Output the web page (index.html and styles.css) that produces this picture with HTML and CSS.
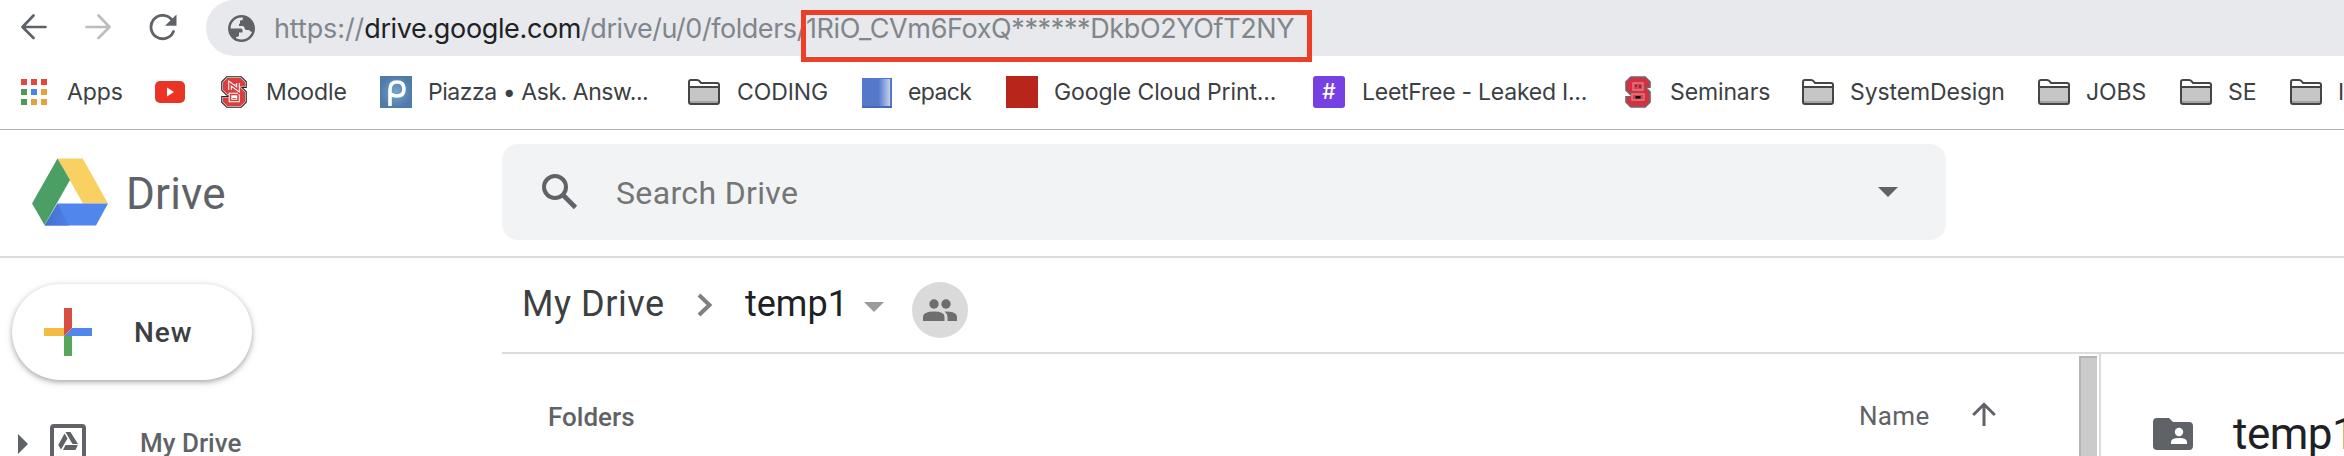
FILE: index.html
```
<!DOCTYPE html>
<html lang="en">
<head>
<meta charset="utf-8">
<title>temp1 - Google Drive</title>
<link rel="stylesheet" href="styles.css">
</head>
<body>
<svg class="defs" aria-hidden="true">
  <symbol id="folder" viewBox="0 0 32 26">
    <path d="M1 23V3q0-2 2-2h6q1.500 0 2.500 1.200L13 4h16q2 0 2 2v17q0 2-2 2H3q-2 0-2-2z" fill="#fff"/>
    <path d="M1 8h30v15q0 2-2 2H3q-2 0-2-2z" fill="#c6c6c6"/>
    <path d="M2 22h28v2H2z" fill="#a3a3a3"/>
    <path d="M1 23V3q0-2 2-2h6q1.500 0 2.500 1.200L13 4h16q2 0 2 2v17q0 2-2 2H3q-2 0-2-2zM1 8h30" fill="none" stroke="#454545" stroke-width="2"/>
  </symbol>
</svg>

<header class="toolbar">
  <svg class="nav" width="26" height="26" viewBox="0 0 26 26" fill="none" stroke="#5f6368" stroke-width="2.700" stroke-linecap="round" stroke-linejoin="round"><path d="M24.500 13H1.500M12.500 1.500L1.500 13l11 11"/></svg>
  <svg class="nav" width="26" height="26" viewBox="0 0 26 26" fill="none" stroke="#bdbdbd" stroke-width="2.700" stroke-linecap="round" stroke-linejoin="round"><path d="M1.500 13h23M13.500 1.500l11 11.500-11 11"/></svg>
  <svg class="nav" width="28" height="27" viewBox="0 0 28 27"><path d="M22.200 5A11.700 11.700 0 1 0 24.500 17.500" fill="none" stroke="#5f6368" stroke-width="2.800" stroke-linecap="round"/><path d="M27.500 .5v11.300H16z" fill="#5f6368"/></svg>
  <div class="omnibox">
    <svg class="globe" width="27" height="27" viewBox="0 0 27 27"><circle cx="13.500" cy="13.500" r="12.200" fill="none" stroke="#5f6368" stroke-width="2.500"/><path d="M1.500 13.500h11.500q1.500 0 1.500 1.500v2.500h-3.500v2.500q0 2-2 2h-1v4A13 13 0 0 1 1.500 13.500z" fill="#5f6368"/><path d="M15 1.500v2q0 2-2 2h-1v3.200h-1v2.200h3.500q2 0 2 2t2 2h2q1.500 0 2 1.500l3.500 1A13 13 0 0 0 15 1.500z" fill="#5f6368"/></svg>
    <span class="url"><span class="scheme">https://</span><span class="host">drive.google.com</span><span class="path">/drive/u/0/folders/</span><span class="ident">1RiO_CVm6FoxQ******DkbO2YOfT2NY</span></span>
    <span class="marker"></span>
  </div>
</header>

<nav class="bookmarks">
  <svg width="26" height="26" viewBox="0 0 26 26"><path fill="#e2493e" d="M0 0h6v6H0zM10 0h6v6h-6zM20 0h6v6h-6z"/><path fill="#4f985a" d="M0 10h6v6H0zM0 20h6v6H0z"/><path fill="#4587f0" d="M10 10h6v6h-6z"/><path fill="#e5a13a" d="M20 10h6v6h-6zM10 20h6v6h-6zM20 20h6v6h-6z"/></svg>
  <span>Apps</span>
  <svg class="wide" width="30" height="22" viewBox="0 0 30 22"><rect width="30" height="22" rx="5" fill="#ea3424"/><path d="M12 6.500v9l7-4.500z" fill="#fff"/></svg>
  <svg width="26" height="32" viewBox="0 0 26 32"><g fill="none"><path d="M21 12V7.500L18.500 5h-11L5 7.500v5L7.500 15h11l2.500 2.500v7L18.500 27h-11L5 24.500V20" stroke="#16282b" stroke-width="9.600"/><path d="M21 11V7.500L18.500 5h-11L5 7.500v5L7.500 15h11l2.500 2.500v7L18.500 27h-11L5 24.500V21" stroke="#f3d9d8" stroke-width="7.400"/><path d="M21 10.500V7.500L18.500 5h-11L5 7.500v5L7.500 15h11l2.500 2.500v7L18.500 27h-11L5 24.500V21.500" stroke="#d9403d" stroke-width="6"/><path d="M9 14V7.500l8 6V7M17 18.500H9.500v6h7.500v-6" stroke="#fff" stroke-width="3.600"/><path d="M9 14V7.500l8 6V7M17 18.500H9.500v6h7.500v-6" stroke="#d9403d" stroke-width="1.600"/></g></svg>
  <span>Moodle</span>
  <svg class="nudge" width="32" height="32" viewBox="0 0 32 32"><defs><radialGradient id="pz"><stop stop-color="#77a4cd"/><stop offset="1" stop-color="#4e7ba8"/></radialGradient></defs><path fill="url(#pz)" d="M0 0h32v32H0z"/><path d="M10 30V13.500q0-7.500 7-7.500t7 7-7 7q-4 0-6-2" fill="none" stroke="#fff" stroke-width="3.600"/></svg>
  <span class="piazza">Piazza • Ask. Answ...</span>
  <svg width="32" height="26"><use href="#folder"/></svg>
  <span>CODING</span>
  <svg class="low" width="30" height="30" viewBox="0 0 30 30"><defs><linearGradient id="ep"><stop offset=".55" stop-color="#5578cb"/><stop offset=".94" stop-color="#c4d2f0"/><stop offset=".95" stop-color="#5578cb"/></linearGradient></defs><path fill="url(#ep)" d="M0 0h30v30H0z"/><path fill="#4568bb" d="M0 28h30v2H0z"/><path fill="#4f76d0" d="M0 0h30v1H0z"/></svg>
  <span class="tighter">epack</span>
  <svg width="32" height="32"><path fill="#b7251b" d="M0 0h32v32H0z"/></svg>
  <span>Google Cloud Print...</span>
  <span class="hash">#</span>
  <span class="tight">LeetFree - Leaked I...</span>
  <svg class="nudge" width="26" height="32" viewBox="0 0 26 32"><g fill="none"><path d="M21 12V7.500L18.500 5h-11L5 7.500v5L7.500 15h11l2.500 2.500v7L18.500 27h-11L5 24.500V20" stroke="#6f6669" stroke-width="9.600"/><path d="M21 11V7.500L18.500 5h-11L5 7.500v5L7.500 15h11l2.500 2.500v7L18.500 27h-11L5 24.500V21" stroke="#d5303f" stroke-width="6.600"/></g><path d="M8 7h10v7H8zM7 18h12v6H7z" fill="#d04553" stroke="#e07a86" stroke-width="1.400"/><path d="M10.500 20h5v2.500h-5z" fill="#000"/><path d="M10 9h2v2h-2zM14 9h2v3h-2z" fill="#8e2832"/></svg>
  <span>Seminars</span>
  <svg width="32" height="26"><use href="#folder"/></svg>
  <span>SystemDesign</span>
  <svg width="32" height="26"><use href="#folder"/></svg>
  <span>JOBS</span>
  <svg width="32" height="26"><use href="#folder"/></svg>
  <span>SE</span>
  <svg width="32" height="26"><use href="#folder"/></svg>
  <span>I</span>
</nav>

<div class="drive-header">
  <div class="brand">
    <svg width="76" height="68" viewBox="0 0 76 68"><defs><linearGradient id="sh" x1="0" x2="1"><stop stop-color="#456fce"/><stop offset="1" stop-color="#4f80e4"/></linearGradient></defs><path d="M25.500.5h25.200L76 45.500H51z" fill="#f9d163"/><path d="M25.500.5L38 22 12.500 67 0 45.500z" fill="#4b9f64"/><path d="M25.500 45.500H76L64 67.500H12.500z" fill="#5186ec"/><path d="M25.500 45.500L37 67.500H12.500z" fill="url(#sh)"/></svg>
    <span>Drive</span>
  </div>
  <div class="search">
    <svg width="36" height="36" viewBox="0 0 36 36" fill="none" stroke="#5f6368" stroke-width="4"><circle cx="13" cy="13" r="11"/><path d="M20.500 20.500L33.500 33.500" stroke-width="4.600"/></svg>
    <span>Search Drive</span>
    <svg class="caret" width="20" height="10"><path d="M0 0h20L10 10z" fill="#5f6368"/></svg>
  </div>
</div>

<div class="content">
  <aside class="sidebar">
    <div class="new">
      <svg width="48" height="48" viewBox="0 0 48 48"><path fill="#f3bb42" d="M0 20h20v8H0z"/><path fill="#58a55c" d="M20 28h8v20h-8z"/><path fill="#5186ec" d="M28 20h20v8H20z"/><path fill="#d94f3f" d="M20 0h8v20l-8 8z"/></svg>
      <span>New</span>
    </div>
    <div class="tree">
      <svg width="10" height="20"><path d="M0 0l10 10L0 20z" fill="#5f6368"/></svg>
      <svg class="drive-box" width="36" height="36" viewBox="0 0 36 36"><rect x="2" y="2" width="32" height="32" rx="2" fill="none" stroke="#5f6368" stroke-width="4"/><g fill="#5f6368"><path d="M15.500 8h5l7.500 12h-5.500z"/><path d="M14.500 9.500l3 5-6.500 11-2.700-4.500z"/><path d="M15.500 21h12.300l-2.300 5H13z"/></g></svg>
      <span>My Drive</span>
    </div>
  </aside>
  <main class="main">
    <div class="crumbs">
      <span class="root">My Drive</span>
      <svg class="chevron" width="16" height="24" viewBox="0 0 16 24"><path d="M2 2l10.500 10L2 22" fill="none" stroke="#808080" stroke-width="4"/></svg>
      <span class="leaf">temp1</span>
      <svg class="down" width="20" height="10"><path d="M0 0h20L10 10z" fill="#999a9e"/></svg>
      <span class="shared"><svg width="34" height="22" viewBox="0 0 34 22" fill="#6e6e6e"><circle cx="11" cy="5" r="4.700"/><circle cx="23" cy="5" r="4.700"/><path d="M0 22v-4q0-5.500 11-5.500T21.500 18v4z"/><path d="M21.500 12.600Q34 12.500 34 18v4h-9.500v-4q0-3.200-3-5.400z"/></svg></span>
    </div>
    <div class="panes">
      <section class="list">
        <span class="label">Folders</span>
        <span class="sort">Name</span>
        <svg width="24" height="24" viewBox="0 0 24 24" fill="none" stroke="#5f6368" stroke-width="3"><path d="M12 24V2.500M1.200 13L12 2.300 22.800 13"/></svg>
      </section>
      <div class="scrollbar"></div>
      <section class="details">
        <svg width="40" height="32" viewBox="0 0 40 32"><path d="M4 0h12l4 4h16q4 0 4 4v20q0 4-4 4H4q-4 0-4-4V4q0-4 4-4z" fill="#5f6368"/><circle cx="26" cy="14" r="4.200" fill="#fff"/><path d="M18 26v-2q0-4 8-4t8 4v2z" fill="#fff"/></svg>
        <span>temp1</span>
      </section>
    </div>
  </main>
</div>
</body>
</html>
```
FILE: styles.css
```
* { box-sizing: border-box; }
body {
  margin: 0;
  width: 2344px;
  height: 456px;
  overflow: hidden;
  background: #fff;
  font-family: Roboto, "Liberation Sans", sans-serif;
  color: #5f6368;
}
svg { display: block; flex: none; }
span { white-space: nowrap; }
.defs { display: none; }

.toolbar { display: flex; height: 56px; padding-left: 21px; overflow: visible; }
.nav { margin-top: 14px; margin-right: 38px; }
.nav:nth-child(3) { margin-right: 29px; }
.omnibox {
  position: relative;
  display: flex;
  align-items: center;
  flex: 1;
  padding-left: 22px;
  background: #e8e9ed;
  border-radius: 28px 0 0 28px;
  font: 27px/56px Inter, "Liberation Sans", sans-serif;
}
.url { display: flex; margin-left: 19px; padding-top: 1px; color: #80868b; }
.scheme { letter-spacing: -0.1px; }
.host { color: #202124; letter-spacing: -0.36px; }
.path { letter-spacing: -0.45px; }
.ident { letter-spacing: -0.38px; }
.marker {
  position: absolute;
  left: 595px;
  top: 10px;
  width: 511px;
  height: 52px;
  border: 5px solid #ee3f26;
}

.bookmarks {
  display: grid;
  grid-template-columns: 46px 88px 66px 45px 113px 49px 260px 49px 125px 46px 98px 48px 259px 49px 262px 46px 132px 48px 188px 48px 94px 48px 62px 48px auto;
  align-items: center;
  height: 74px;
  padding: 0 0 1px 21px;
  border-bottom: 1px solid #b1b1b1;
  overflow: hidden;
  color: #3c4043;
  font: 23px/30px Inter, "Liberation Sans", sans-serif;
  letter-spacing: -0.12px;
}
.bookmarks .tight { letter-spacing: -0.25px; }
.bookmarks .piazza { letter-spacing: -0.45px; }
.bookmarks .tighter { letter-spacing: -0.6px; }
.bookmarks .low { margin-top: 2px; }
.bookmarks .nudge { margin-left: 1px; }
.bookmarks .hash {
  width: 32px;
  height: 32px;
  border-radius: 3px;
  background: #7640e3;
  color: #fff;
  font: 500 21px/32px Inter, sans-serif;
  text-align: center;
}

.drive-header {
  display: flex;
  align-items: center;
  height: 128px;
  border-bottom: 2px solid #dadce0;
  padding: 0 0 2px 32px;
}
.brand { display: flex; align-items: center; width: 470px; font-size: 44px; letter-spacing: 0.2px; }
.brand span { margin-left: 18px; padding-top: 3px; }
.search {
  display: flex;
  align-items: center;
  width: 1444px;
  height: 96px;
  padding: 0 48px 0 40px;
  border-radius: 16px;
  background: #f1f3f4;
  font-size: 32px;
  letter-spacing: 0.35px;
  color: #757575;
}
.search span { flex: 1; margin-left: 38px; padding-top: 2px; }

.content { display: flex; height: 198px; }
.sidebar { width: 502px; padding: 26px 0 0 12px; }
.new {
  display: flex;
  align-items: center;
  width: 240px;
  height: 96px;
  padding-left: 32px;
  border-radius: 48px;
  box-shadow: 0 2px 4px rgba(60, 64, 67, .32), 0 2px 7px 1px rgba(60, 64, 67, .16);
  color: #3c4043;
  font-weight: 500;
  font-size: 28px;
  letter-spacing: 1px;
}
.new span { margin-left: 42px; }
.tree {
  display: flex;
  align-items: center;
  height: 40px;
  margin-top: 44px;
  padding-left: 6px;
  font-weight: 500;
  font-size: 26px;
}
.tree span { padding-bottom: 2px; }
.drive-box { margin: -4px 54px 0 22px; }

.main { flex: 1; min-width: 0; }
.crumbs {
  display: flex;
  align-items: center;
  height: 96px;
  padding-left: 20px;
  border-bottom: 2px solid #dadce0;
  font-size: 36px;
  letter-spacing: 0.55px;
}
.root { color: #3c4043; width: 175px; }
.chevron { margin-right: 32px; }
.root, .leaf { padding-bottom: 2px; }
.leaf { color: #202124; width: 119px; letter-spacing: 0; }
.down { margin: 3px 28px 0 0; }
.shared {
  display: flex;
  align-items: center;
  justify-content: center;
  width: 56px;
  height: 56px;
  margin-top: 10px;
  border-radius: 50%;
  background: #dadada;
}
.panes { display: flex; height: 102px; }
.list {
  display: flex;
  align-items: flex-start;
  width: 1576px;
  padding: 47px 0 0 46px;
  font-weight: 500;
  font-size: 26px;
  line-height: 30px;
}
.list .label { width: 1311px; padding-top: 1px; }
.list .sort { width: 113px; font-weight: 400; letter-spacing: 0.3px; }
.list svg { margin-top: 1px; }
.scrollbar {
  width: 18px;
  margin: 2px 2px 0 1px;
  border: solid #b4b4b4;
  border-width: 2px 0 0 2px;
  background: #cbcbcb;
}
.details {
  display: flex;
  flex: 1;
  min-width: 0;
  border-left: 2px solid #dadce0;
  padding: 54px 0 0 52px;
  color: #202124;
  font-size: 44px;
  line-height: 52px;
  letter-spacing: -0.5px;
  overflow: hidden;
}
.details svg { margin-top: 10px; }
.details span { margin-left: 40px; }
```
